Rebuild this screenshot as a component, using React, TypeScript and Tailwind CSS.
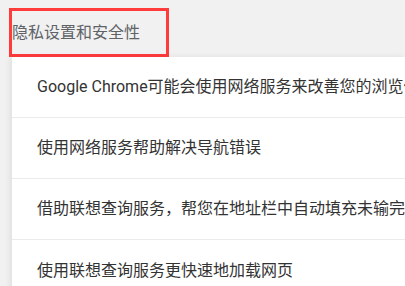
const rows = [
  'Google Chrome可能会使用网络服务来改善您的浏览体验',
  '使用网络服务帮助解决导航错误',
  '借助联想查询服务，帮您在地址栏中自动填充未输完的搜索字词和网址',
  '使用联想查询服务更快速地加载网页',
]

export default function App() {
  return (
    <div
      className="h-[286px] w-[405px] overflow-hidden bg-[#f1f1f1]"
      style={{ fontFamily: 'Roboto, "Noto Sans CJK SC", sans-serif' }}
    >
      <div className="h-[57px] pl-[9px] pt-[8px]">
        <div className="flex h-[49px] w-[160px] items-center border-[3px] border-[#ff3b3b]">
          <span className="text-[16px] leading-none text-[#5f6368]">隐私设置和安全性</span>
        </div>
      </div>

      <div className="ml-[12px] bg-white shadow-[-2px_0_6px_rgba(0,0,0,0.08)]">
        {rows.map((text) => (
          <div
            key={text}
            className="flex h-[61px] items-center overflow-hidden whitespace-nowrap border-b border-[#ebebeb] pl-[25px] text-[16px] text-[#333333] last:border-b-0"
          >
            {text}
          </div>
        ))}
      </div>
    </div>
  )
}
